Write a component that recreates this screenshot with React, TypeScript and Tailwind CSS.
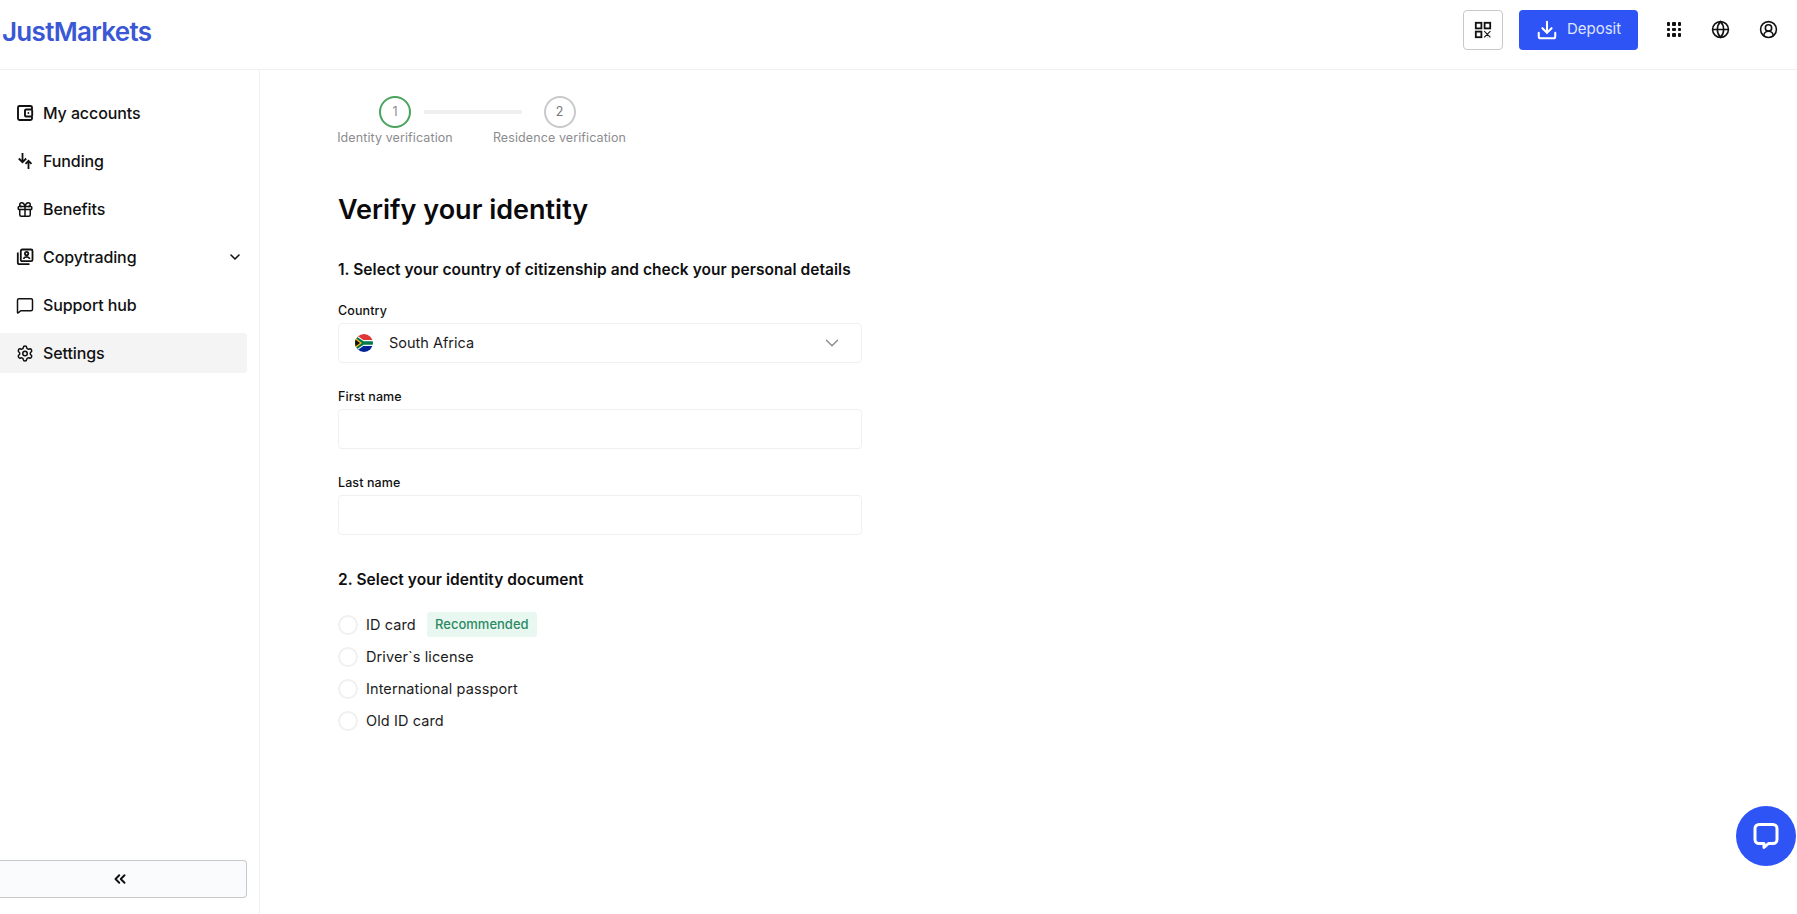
import { ChevronDown, ChevronsLeft, CircleUserRound, Download, Gift, Globe, MessageSquare, Settings } from 'lucide-react';
import type { ReactNode } from 'react';

function WalletIcon() {
  return (
    <svg width="18" height="18" viewBox="0 0 18 18" fill="none" stroke="currentColor" strokeWidth="1.9">
      <path d="M16 5V3.5A1.5 1.5 0 0 0 14.5 2H3.5A1.5 1.5 0 0 0 2 3.5v11A1.5 1.5 0 0 0 3.5 16h11a1.500 1.500 0 0 0 1.500-1.500V13" />
      <rect x="9" y="5.500" width="7.200" height="7" rx="1" />
      <circle cx="12.400" cy="9" r="0.900" fill="currentColor" stroke="none" />
    </svg>
  );
}

function FundingIcon() {
  return (
    <svg width="18" height="18" viewBox="0 0 18 18" fill="none" stroke="currentColor" strokeWidth="1.8">
      <path d="M6.500 1v9M2.800 6.500l3.700 3.700 3.700-3.700" />
      <path d="M12.500 17V9M9.500 11.800l3-3 3 3" />
    </svg>
  );
}

function CopyIcon() {
  return (
    <svg width="18" height="18" viewBox="0 0 18 18" fill="none" stroke="currentColor" strokeWidth="1.8">
      <path d="M1.800 4.500v10.200a1.500 1.500 0 0 0 1.500 1.500h10.200" />
      <rect x="4.800" y="1.500" width="11.700" height="11.700" rx="1.400" />
      <circle cx="10.600" cy="5.600" r="1.700" />
      <path d="M7.400 10.800c.6-1.400 1.800-2 3.200-2s2.600.6 3.200 2" />
    </svg>
  );
}

function QrIcon() {
  return (
    <svg width="18" height="18" viewBox="0 0 18 18" fill="none" stroke="currentColor" strokeWidth="1.8">
      <rect x="1.800" y="1.800" width="5.600" height="5.600" />
      <rect x="10.600" y="1.800" width="5.600" height="5.600" />
      <rect x="1.800" y="10.600" width="5.600" height="5.600" />
      <path strokeWidth="1.100" d="M10.200 10.200l6.200 6.200M16.400 10.200l-6.200 6.200M13.300 10.200v.1M10.200 13.300h.1M16.400 13.300h.1M13.300 16.300v.1" />
    </svg>
  );
}

function DotsIcon() {
  const dots = [0, 1, 2, 3, 4, 5, 6, 7, 8];
  return (
    <div className="grid grid-cols-3 gap-[2px]">
      {dots.map((d) => (
        <span key={d} className="w-[3.6px] h-[3.6px] rounded-[1px] bg-[#111]" />
      ))}
    </div>
  );
}

function FlagZa() {
  return (
    <svg width="18" height="18" viewBox="0 0 18 18" className="rounded-full">
      <rect width="18" height="6" fill="#de3836" />
      <rect y="12" width="18" height="6" fill="#002395" />
      <rect y="6" width="18" height="6" fill="#fff" />
      <path d="M0 0l9 6.500h9v5H9l-9 6.500z" fill="#fff" />
      <path d="M0 1.400L8.600 7.200H18v3.600H8.600L0 16.600z" fill="#007a4d" />
      <path d="M0 3.600L7 9 0 14.400z" fill="#ffb612" />
      <path d="M0 5.200L5 9 0 12.800z" fill="#111" />
    </svg>
  );
}

function NavItem({ icon, label, active, chevron }: { icon: ReactNode; label: string; active?: boolean; chevron?: boolean }) {
  return (
    <div className={`h-10 flex items-center pl-[16px] pr-[4px] rounded-r-[4px] ${active ? 'bg-[#f4f4f5]' : ''}`}>
      <span className="w-[18px] flex justify-center text-[#111]">{icon}</span>
      <span className="ml-[9px] text-[16px] font-medium text-[#111] tracking-[-0.1px]">{label}</span>
      {chevron && <ChevronDown size={16} strokeWidth={2.4} className="ml-auto text-[#111]" />}
    </div>
  );
}

function Field({ label, children }: { label: string; children: ReactNode }) {
  return (
    <div className="flex flex-col">
      <span className="h-[14px] leading-[14px] text-[12.5px] font-medium text-[#111] tracking-[0.1px]">{label}</span>
      <div className="mt-[5px] h-10 border border-[#f0f0f1] rounded-[4px] flex items-center px-[16px]">
        {children}
      </div>
    </div>
  );
}

function Radio({ label, badge }: { label: string; badge?: boolean }) {
  return (
    <div className="h-8 flex items-center">
      <span className="w-5 h-5 rounded-full border-2 border-[#f0f0f1]" />
      <span className="ml-[8px] text-[14.5px] text-[#1c1c1e] tracking-[0.1px]">{label}</span>
      {badge && (
        <span className="ml-[11px] h-[25px] w-[110px] flex items-center justify-center rounded-[3px] bg-[#e9f7f1] text-[13px] font-medium text-[#2c8a63]">
          Recommended
        </span>
      )}
    </div>
  );
}

export default function App() {
  return (
    <div className="w-[1797px] h-[914px] bg-white flex flex-col overflow-hidden relative font-['Inter',sans-serif]">
      <header className="h-[70px] shrink-0 border-b border-[#f0f0f1] flex items-center pl-[2px] pr-[20px] pb-[10px]">
        <span className="pt-[4px] text-[26px] font-semibold text-[#3a57d6] tracking-[-0.7px]">JustMarkets</span>
        <div className="ml-auto flex items-center">
          <button className="w-10 h-10 border border-[#c9c9cc] rounded-[4px] flex items-center justify-center text-[#111]">
            <QrIcon />
          </button>
          <button className="ml-[16px] w-[119px] h-10 bg-[#2f54f5] rounded-[4px] flex items-center justify-center gap-[9px] text-white">
            <Download size={22} strokeWidth={2.2} />
            <span className="text-[15px] text-[#dfe5ff]">Deposit</span>
          </button>
          <span className="ml-[24px] w-6 flex justify-center"><DotsIcon /></span>
          <Globe size={19} strokeWidth={2} className="ml-[25px] text-[#111]" />
          <CircleUserRound size={19} strokeWidth={2} className="ml-[29px] mr-[-1px] text-[#111]" />
        </div>
      </header>
      <div className="flex-1 flex min-h-0">
        <aside className="w-[260px] shrink-0 border-r border-[#f0f0f1] pr-[12px] pt-[23px] pb-[16px] flex flex-col">
          <div className="flex flex-col gap-[8px]">
            <NavItem icon={<WalletIcon />} label="My accounts" />
            <NavItem icon={<FundingIcon />} label="Funding" />
            <NavItem icon={<Gift size={19} strokeWidth={2} />} label="Benefits" />
            <NavItem icon={<CopyIcon />} label="Copytrading" chevron />
            <NavItem icon={<MessageSquare size={19} strokeWidth={2} />} label="Support hub" />
            <NavItem icon={<Settings size={19} strokeWidth={2} />} label="Settings" active />
          </div>
          <button className="mt-auto h-[38px] border border-[#c9c9cc] border-l-0 rounded-r-[4px] bg-[#fafbfc] flex items-center justify-center pr-[6px] text-[#111]">
            <ChevronsLeft size={18} strokeWidth={2.6} />
          </button>
        </aside>
        <main className="flex-1 pl-[78px] pt-[26px]">
          <div className="w-[524px]">
            <div className="relative flex gap-[42px] text-[12.5px] text-[#8c8c90]">
              <div className="w-[114px] flex flex-col items-center">
                <span className="w-8 h-8 rounded-full border-2 border-[#4aa35c] flex items-center justify-center text-[12.5px] text-[#8c8c90]">1</span>
                <span className="mt-[1px] whitespace-nowrap tracking-[0.1px]">Identity verification</span>
              </div>
              <span className="absolute left-[86px] top-[14px] w-[98px] h-1 bg-[#f0f0f1]" />
              <div className="w-[131px] flex flex-col items-center">
                <span className="w-8 h-8 rounded-full border-2 border-[#c9c9cc] flex items-center justify-center text-[12.5px] text-[#77777b]">2</span>
                <span className="mt-[1px] whitespace-nowrap tracking-[0.1px]">Residence verification</span>
              </div>
            </div>
            <h1 className="mt-[44px] text-[27px] leading-[36px] font-semibold text-[#0a0a0c]">Verify your identity</h1>
            <h2 className="mt-[30px] text-[15.5px] leading-[24px] font-semibold text-[#0f0f11] tracking-[0.05px]">1. Select your country of citizenship and check your personal details</h2>
            <div className="mt-[22px] flex flex-col gap-[27px]">
              <Field label="Country">
                <FlagZa />
                <span className="ml-[16px] text-[14.5px] text-[#1c1c1e]">South Africa</span>
                <ChevronDown size={22} strokeWidth={1.5} className="ml-auto mr-[2px] text-[#8c8c90]" />
              </Field>
              <Field label="First name"><span /></Field>
              <Field label="Last name"><span /></Field>
            </div>
            <h2 className="mt-[33px] text-[15.5px] leading-[24px] font-semibold text-[#0f0f11] tracking-[0.07px]">2. Select your identity document</h2>
            <div className="mt-[17px] flex flex-col">
              <Radio label="ID card" badge />
              <Radio label="Driver`s license" />
              <Radio label="International passport" />
              <Radio label="Old ID card" />
            </div>
          </div>
        </main>
      </div>
      <div className="absolute left-[1736px] top-[806px] w-[60px] h-[60px] rounded-full bg-[#2f54f5] flex items-center justify-center">
        <svg width="28" height="28" viewBox="0 0 28 28" fill="none" stroke="#fff" strokeWidth="3">
          <path d="M7 2.500h14a4 4 0 0 1 4 4v11a4 4 0 0 1-4 4h-4.500l-4.500 4v-4H7a4 4 0 0 1-4-4v-11a4 4 0 0 1 4-4z" strokeLinejoin="round" />
        </svg>
      </div>
    </div>
  );
}
